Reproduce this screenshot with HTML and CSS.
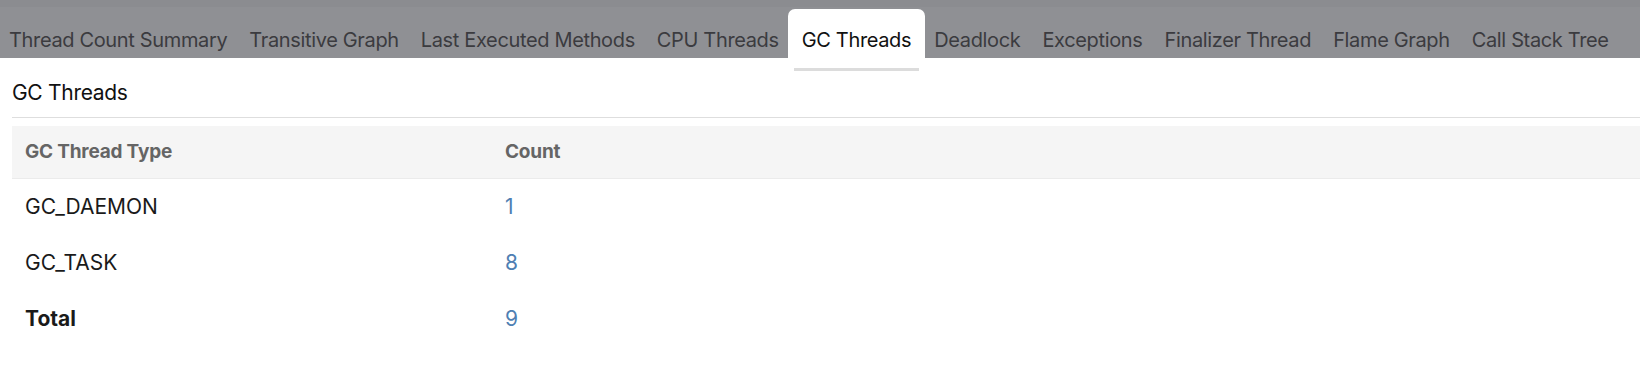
FILE: index.html
```html
<!DOCTYPE html>
<html lang="en">
<head>
<meta charset="utf-8">
<title>GC Threads</title>
<link rel="stylesheet" href="styles.css">
</head>
<body>
<nav class="tabbar">
  <div class="tab">Thread Count Summary</div>
  <div class="tab">Transitive Graph</div>
  <div class="tab">Last Executed Methods</div>
  <div class="tab">CPU Threads</div>
  <div class="tab active">GC Threads</div>
  <div class="tab">Deadlock</div>
  <div class="tab">Exceptions</div>
  <div class="tab">Finalizer Thread</div>
  <div class="tab">Flame Graph</div>
  <div class="tab">Call Stack Tree</div>
</nav>
<main class="panel">
  <h2 class="title">GC Threads</h2>
  <table class="grid">
    <colgroup><col class="col-type"><col></colgroup>
    <thead>
      <tr><th>GC Thread Type</th><th>Count</th></tr>
    </thead>
    <tbody>
      <tr><td>GC_DAEMON</td><td class="num">1</td></tr>
      <tr><td>GC_TASK</td><td class="num">8</td></tr>
      <tr class="total"><td>Total</td><td class="num">9</td></tr>
    </tbody>
  </table>
</main>
</body>
</html>
```

FILE: styles.css
```css
* { box-sizing: border-box; }
html, body { margin: 0; padding: 0; background: #fff; }
body {
  font-family: Inter, "Noto Sans", "Liberation Sans", sans-serif;
  color: #1a1a1a;
}
.tabbar {
  display: flex;
  align-items: flex-end;
  gap: 4px;
  height: 58px;
  padding-left: 0;
  background: #8f9094;
  border-top: 7px solid #8b8c90;
}
.tab {
  position: relative;
  height: 49px;
  padding: 19px 9px 6px;
  font-size: 20px;
  line-height: 24px;
  letter-spacing: -0.35px;
  color: #3b3b3f;
  white-space: nowrap;
}
.tab.active {
  margin: 0 -4px;
  padding: 19px 14px 6px;
  background: #fff;
  color: #111;
  border-radius: 7px 7px 0 0;
}
.tab.active::after {
  content: "";
  position: absolute;
  left: 6px;
  right: 6px;
  top: 59px;
  height: 3px;
  background: #dcdcdc;
}
.panel { padding-left: 12px; }
.title {
  margin: 0 0 8px;
  padding: 23px 0 12px;
  font-size: 21px;
  line-height: 24px;
  font-weight: 400;
  letter-spacing: -0.3px;
  color: #111;
  border-bottom: 1px solid #dedede;
}
.grid {
  width: 100%;
  border-collapse: collapse;
  table-layout: fixed;
}
.col-type { width: 480px; }
.grid th {
  height: 52px;
  padding: 0 13px;
  text-align: left;
  font-size: 19px;
  font-weight: 700;
  letter-spacing: -0.2px;
  color: #656565;
  background: #f5f5f5;
  border-bottom: 1px solid #ebebeb;
}
.grid td {
  height: 56px;
  padding: 0 13px;
  font-size: 21px;
  color: #1a1a1a;
}
.grid td.num { color: #4f7fb3; }
.grid tr.total td:first-child { font-weight: 700; }
```
